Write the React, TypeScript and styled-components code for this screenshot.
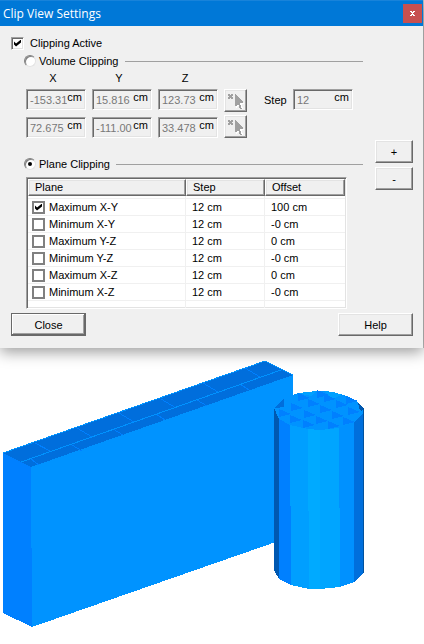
import React, { useState } from "react";
import styled, { createGlobalStyle, css } from "styled-components";

const GlobalStyle = createGlobalStyle`
  * { box-sizing: border-box; }
  body {
    margin: 0;
    background: #fff;
    color: #000;
    font: 11px/16px "Liberation Sans", Arial, sans-serif;
  }
  button, input { font: inherit; color: inherit; margin: 0; padding: 0; }
`;

const sunken = css`
  border: 1px solid;
  border-color: #a0a0a0 #fff #fff #a0a0a0;
  box-shadow: inset 1px 1px #696969, inset -1px -1px #e3e3e3;
`;

const raised = css`
  border: 1px solid;
  border-color: #fff #696969 #696969 #fff;
  box-shadow: inset -1px -1px #a0a0a0, inset 1px 1px #e3e3e3;
`;

const Dialog = styled.section`
  position: relative;
  margin-right: 1px;
  background: #f0f0f0;
  box-shadow: 0 4px 14px rgba(0, 0, 0, 0.4), 1px 0 #c4c4c4;
`;

const TitleBar = styled.header`
  display: flex;
  align-items: center;
  justify-content: space-between;
  height: 26px;
  padding: 0 1px 0 3px;
  background: #0078d7;
  border-top: 1px solid #1883da;
`;

const Title = styled.h1`
  margin: 0;
  color: #fff;
  font: 400 12px/20px "Open Sans", "Noto Sans", sans-serif;
`;

const CloseIcon = styled.button`
  display: grid;
  place-items: center;
  width: 19px;
  height: 19px;
  border: 0;
  background: #c75050;
`;

const Body = styled.div`
  padding: 8px 10px 12px 11px;
`;

const Columns = styled.div`
  display: grid;
  grid-template-columns: minmax(0, 1fr) 38px;
  column-gap: 12px;
`;

const Group = styled.section`
  padding-left: 13px;
`;

const Option = styled.div`
  display: flex;
  align-items: center;
  gap: 3px;
  height: 18px;
`;

const ActiveOption = styled(Option)`
  gap: 6px;
`;

const Rule = styled.hr`
  flex: 1;
  height: 1px;
  margin: 0 0 0 3px;
  border: 0;
  background: #a0a0a0;
`;

const Check = styled.input<{ $flat?: boolean }>`
  appearance: none;
  display: grid;
  place-items: center;
  flex: none;
  width: 13px;
  height: 13px;
  background: #fff;
  ${(p) => (p.$flat ? "border: 2px solid #808080;" : sunken)}
  &:checked::before {
    content: "";
    width: 7px;
    height: 7px;
    background: #000;
    clip-path: polygon(0 29%, 29% 57%, 100% 0, 100% 43%, 29% 100%, 0 71%);
  }
`;

const Radio = styled.input`
  appearance: none;
  display: grid;
  place-items: center;
  flex: none;
  width: 12px;
  height: 12px;
  border: 1px solid;
  border-color: #808080 #e3e3e3 #e3e3e3 #808080;
  border-radius: 50%;
  background: #fff;
  box-shadow: inset 1px 1px #808080;
  &:checked::before {
    content: "";
    width: 4px;
    height: 4px;
    border-radius: 50%;
    background: #000;
  }
`;

const Coordinates = styled.div`
  display: grid;
  grid-template-columns: 60px 60px 60px 23px 34px 60px;
  grid-template-rows: 16px 23px 23px;
  column-gap: 6px;
  row-gap: 3px;
  margin: 0 0 17px 2px;
`;

const Axis = styled.span<{ $column: number }>`
  grid-row: 1;
  grid-column: ${(p) => p.$column};
  padding-right: 6px;
  text-align: center;
`;

const Field = styled.label<{ $row: number; $column: number }>`
  display: flex;
  align-items: flex-start;
  grid-row: ${(p) => p.$row};
  grid-column: ${(p) => p.$column};
  align-self: ${(p) => (p.$row === 3 ? "end" : "start")};
  height: 21px;
  padding: 0 3px;
  ${sunken}
`;

const FieldInput = styled.input`
  flex: 1;
  min-width: 0;
  height: 19px;
  border: 0;
  background: transparent;
  color: #787878;
`;

const Unit = styled.span`
  line-height: 14px;
`;

const StepLabel = styled.label`
  grid-row: 2;
  grid-column: 5;
  padding: 3px 0 0 11px;
`;

const Pick = styled.button<{ $row: number }>`
  display: grid;
  place-items: center;
  grid-row: ${(p) => p.$row};
  grid-column: 4;
  background: #f0f0f0;
  ${raised}
`;

const Adjusters = styled.div`
  display: grid;
  align-content: start;
  gap: 4px;
  padding-top: 88px;
`;

const PushButton = styled.button<{ $wide?: boolean; $default?: boolean }>`
  ${(p) => p.$wide && "width: 75px;"}
  height: 23px;
  background: #f0f0f0;
  ${raised}
  ${(p) =>
    p.$default &&
    css`
      border-color: #696969;
      box-shadow: inset -1px -1px #696969, inset 1px 1px #fff, inset -2px -2px #a0a0a0;
    `}
`;

const ListBox = styled.div`
  height: 132px;
  margin: 4px 16px 0 2px;
  padding: 1px;
  overflow: hidden;
  background: #fff;
  ${sunken}
`;

const PlaneTable = styled.table`
  width: 100%;
  table-layout: fixed;
  border-collapse: separate;
  border-spacing: 0;
`;

const HeadCell = styled.th<{ $width?: number }>`
  ${(p) => p.$width && `width: ${p.$width}px;`}
  height: 17px;
  padding: 0 6px;
  background: #f0f0f0;
  font-weight: 400;
  line-height: 15px;
  text-align: left;
  ${raised}
`;

const Cell = styled.td`
  height: 17px;
  padding: 0 0 0 6px;
  border-bottom: 1px solid #f0f0f0;
  border-right: 1px solid #f0f0f0;
  &:first-child { padding-left: 4px; }
  &:last-child { border-right: 0; }
`;

const FirstGap = styled(Cell)`
  height: 3px;
  line-height: 0;
`;

const PlaneLabel = styled.label`
  display: flex;
  align-items: center;
  gap: 4px;
`;

const Footer = styled.footer`
  display: flex;
  justify-content: space-between;
  margin-top: 4px;
`;

const Scene = styled.svg`
  display: block;
  width: 100%;
  height: auto;
`;

const CursorIcon = () => (
  <svg width="17" height="17" viewBox="0 0 17 17" shapeRendering="crispEdges" aria-hidden="true">
    <path d="M9 4v12h1l2-3 2 4h2l-1-5h2z" fill="#fff" />
    <path d="M1 2h2v1h1V2h2v2H5v1h1v2H4V6H3v1H1V5h1V4H1z" fill="#a0a0a0" />
    <path d="M8 2v12h1l2-2 2 5h2l-2-5v-1h3v-1z" fill="#a0a0a0" />
  </svg>
);

const CrossIcon = () => (
  <svg width="5" height="5" viewBox="0 0 5 5" shapeRendering="crispEdges" aria-hidden="true">
    <path d="M0 0h2v1h1V0h2v1H4v1H3v1h1v1h1v1H3V4H2v1H0V4h1V3h1V2H1V1H0z" fill="#fff" />
  </svg>
);

const values = [
  ["-153.31", "15.816", "123.73"],
  ["72.675", "-111.00", "33.478"],
];

const planes = [
  ["Maximum X-Y", "100 cm"],
  ["Minimum X-Y", "-0 cm"],
  ["Maximum Y-Z", "0 cm"],
  ["Minimum Y-Z", "-0 cm"],
  ["Maximum X-Z", "0 cm"],
  ["Minimum X-Z", "-0 cm"],
];

const facets = [
  [298, 393], [317, 390],
  [291, 403], [308, 399], [324, 394], [346, 396],
  [279, 409], [304, 410], [320, 405], [336, 400],
  [290, 415], [316, 416], [332, 411], [348, 407],
  [303, 420], [328, 421], [343, 417],
];

const bands: [string, string][] = [
  ["274,408 279,419 279,579 274,570", "#0058b0"],
  ["279,419 290,425 291,585 279,579", "#0080ff"],
  ["290,425 308,429 309,589 291,585", "#009fff"],
  ["308,429 320,430 320,589 309,589", "#00aaff"],
  ["320,430 339,428 340,587 320,589", "#00a5ff"],
  ["339,428 354,422 354,582 340,587", "#0091ff"],
  ["354,422 363,413 363,574 354,582", "#006fdc"],
  ["363,408 364,408 364,572 363,574", "#00529f"],
];

const ModelView = () => (
  <Scene viewBox="0 348 424 296" shapeRendering="crispEdges" role="img" aria-label="Clipped wall and column">
    <polygon points="3,453 31,467 32,627 3,613" fill="#0080ff" />
    <polygon points="31,467 293,375 293,536 32,627" fill="#0093ff" />
    <polygon points="3,453 265,361 293,375 31,467" fill="#006edc" />
    <path
      d="M35 443l15 8M77 428l15 9M119 413l15 9M161 399l15 9M203 383l15 9M245 368l15 9M31 459l8 6M72 445l10 6M113 429l10 6M156 414l9 6M197 400l10 6M240 384l9 6"
      stroke="#0080ff"
      fill="none"
    />
    <path d="M3 453L265 361L293 375M21 462L281 370" stroke="#0093ff" fill="none" />
    <polygon
      points="274,408 284,398 298,393 317,391 333,392 347,396 358,402 364,409 363,414 354,423 339,429 320,431 308,430 290,426 279,420"
      fill="#0093ff"
    />
    <polygon points="298,393 317,391 311,396" fill="#00a0ff" />
    <polygon points="325,391 333,392 342,395 332,399" fill="#00a0ff" />
    {facets.map(([x, y]) => (
      <polygon key={`${x}-${y}`} points={`${x},${y} ${x + 12},${y + 5} ${x},${y + 8}`} fill="#0080ff" />
    ))}
    <polygon points="284,398 284,407 275,408" fill="#006edc" />
    <polygon points="358,402 364,409 361,411 359,408" fill="#0058b0" />
    {bands.map(([points, fill]) => (
      <polygon key={points} points={points} fill={fill} />
    ))}
  </Scene>
);

export default function App() {
  const [active, setActive] = useState(true);
  const [mode, setMode] = useState("plane");
  const [checked, setChecked] = useState([true, false, false, false, false, false]);

  return (
    <>
      <GlobalStyle />
      <Dialog aria-label="Clip View Settings">
        <TitleBar>
          <Title>Clip View Settings</Title>
          <CloseIcon type="button" aria-label="Close window"><CrossIcon /></CloseIcon>
        </TitleBar>
        <Body>
          <ActiveOption>
            <Check id="active" type="checkbox" checked={active} onChange={() => setActive(!active)} />
            <label htmlFor="active">Clipping Active</label>
          </ActiveOption>
          <Columns>
            <Group>
              <Option>
                <Radio id="volume" type="radio" name="mode" checked={mode === "volume"} onChange={() => setMode("volume")} />
                <label htmlFor="volume">Volume Clipping</label>
                <Rule />
              </Option>
              <Coordinates>
                <Axis $column={1}>X</Axis>
                <Axis $column={2}>Y</Axis>
                <Axis $column={3}>Z</Axis>
                {values.map((row, r) => (
                  <React.Fragment key={r}>
                    {row.map((value, c) => (
                      <Field key={value} $row={r + 2} $column={c + 1}>
                        <FieldInput defaultValue={value} disabled aria-label={`${"XYZ"[c]} ${r + 1}`} />
                        <Unit>cm</Unit>
                      </Field>
                    ))}
                    <Pick type="button" disabled $row={r + 2} aria-label={`Pick point ${r + 1}`}>
                      <CursorIcon />
                    </Pick>
                  </React.Fragment>
                ))}
                <StepLabel htmlFor="step">Step</StepLabel>
                <Field $row={2} $column={6}>
                  <FieldInput id="step" defaultValue="12" disabled />
                  <Unit>cm</Unit>
                </Field>
              </Coordinates>
              <Option>
                <Radio id="plane" type="radio" name="mode" checked={mode === "plane"} onChange={() => setMode("plane")} />
                <label htmlFor="plane">Plane Clipping</label>
                <Rule />
              </Option>
              <ListBox>
                <PlaneTable>
                  <thead>
                    <tr>
                      <HeadCell $width={158}>Plane</HeadCell>
                      <HeadCell $width={79}>Step</HeadCell>
                      <HeadCell>Offset</HeadCell>
                    </tr>
                  </thead>
                  <tbody>
                    <tr><FirstGap /><FirstGap /><FirstGap /></tr>
                    {planes.map(([name, offset], i) => (
                      <tr key={name}>
                        <Cell>
                          <PlaneLabel>
                            <Check
                              $flat
                              type="checkbox"
                              checked={checked[i]}
                              onChange={() => setChecked(checked.map((v, j) => (j === i ? !v : v)))}
                            />
                            {name}
                          </PlaneLabel>
                        </Cell>
                        <Cell>12 cm</Cell>
                        <Cell>{offset}</Cell>
                      </tr>
                    ))}
                    <tr><Cell /><Cell /><Cell /></tr>
                  </tbody>
                </PlaneTable>
              </ListBox>
            </Group>
            <Adjusters>
              <PushButton type="button">+</PushButton>
              <PushButton type="button">-</PushButton>
            </Adjusters>
          </Columns>
          <Footer>
            <PushButton type="button" $wide $default>Close</PushButton>
            <PushButton type="button" $wide>Help</PushButton>
          </Footer>
        </Body>
      </Dialog>
      <ModelView />
    </>
  );
}
